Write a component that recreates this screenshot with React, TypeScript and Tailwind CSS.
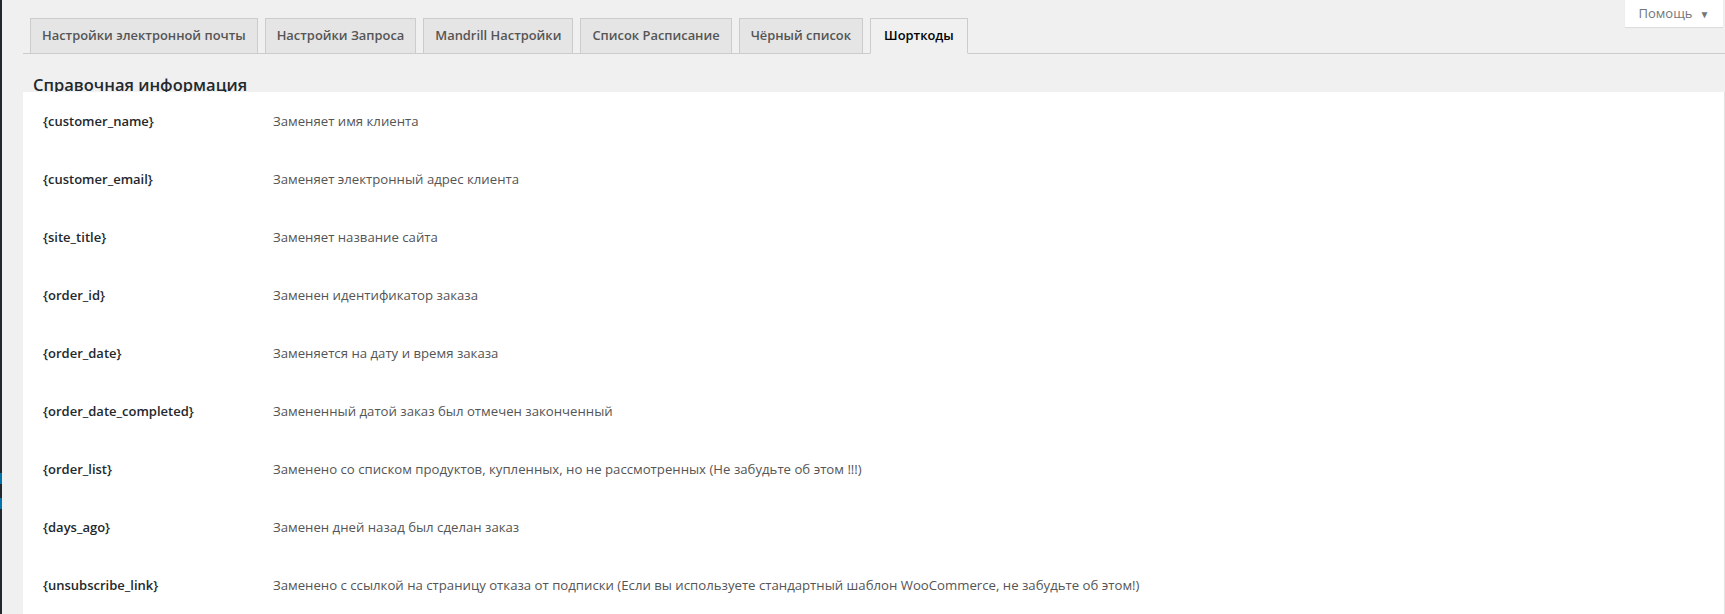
import React from "react";

const tabs = [
  "Настройки электронной почты",
  "Настройки Запроса",
  "Mandrill Настройки",
  "Список Расписание",
  "Чёрный список",
  "Шорткоды",
];

const rows: [string, string][] = [
  ["{customer_name}", "Заменяет имя клиента"],
  ["{customer_email}", "Заменяет электронный адрес клиента"],
  ["{site_title}", "Заменяет название сайта"],
  ["{order_id}", "Заменен идентификатор заказа"],
  ["{order_date}", "Заменяется на дату и время заказа"],
  ["{order_date_completed}", "Замененный датой заказ был отмечен законченный"],
  ["{order_list}", "Заменено со списком продуктов, купленных, но не рассмотренных (Не забудьте об этом !!!)"],
  ["{days_ago}", "Заменен дней назад был сделан заказ"],
  ["{unsubscribe_link}", "Заменено с ссылкой на страницу отказа от подписки (Если вы используете стандартный шаблон WooCommerce, не забудьте об этом!)"],
];

export default function App() {
  return (
    <div
      className="flex h-[614px] w-[1725px] overflow-hidden bg-[#f0f0f0]"
      style={{ fontFamily: '"Open Sans", "Noto Sans", sans-serif' }}
    >
      {/* admin menu edge */}
      <div className="flex w-[2px] shrink-0 flex-col bg-[#23282d]">
        <div className="h-[473px]" />
        <div className="h-[11px] bg-[#0073aa]" />
        <div className="h-[14px]" />
        <div className="h-[11px] bg-[#0073aa]" />
      </div>

      <div className="relative flex-1 pl-[21px]">
        {/* help tab */}
        <div className="absolute right-[2px] top-0 flex h-[27px] w-[98px] items-center justify-center gap-[7px] bg-white text-[13px] text-[#72777c] shadow-[0_1px_1px_rgba(0,0,0,0.08)]">
          <span>Помощь</span>
          <span className="text-[10px] leading-none">▼</span>
        </div>

        {/* tabs */}
        <div className="flex h-[54px] items-end gap-[7px] border-b border-[#cccccc] pl-[7px] pr-[1px]">
          {tabs.map((t, i) => {
            const active = i === tabs.length - 1;
            return (
              <div
                key={t}
                className={
                  active
                    ? "-mb-px flex h-[36px] items-center border border-b-[#f0f0f0] border-[#cccccc] bg-[#f0f0f0] px-[13px] text-[12.9px] font-semibold text-black"
                    : "flex h-[35px] items-center border border-b-0 border-[#cccccc] bg-[#e5e5e5] px-[11px] text-[12.9px] font-semibold text-[#555555]"
                }
              >
                {t}
              </div>
            );
          })}
        </div>

        {/* heading */}
        <div className="h-[38px] overflow-hidden pl-[10px]">
          <h2 className="pt-[19px] text-[16.5px] font-semibold leading-[23px] text-[#23282d]">
            Справочная информация
          </h2>
        </div>

        {/* panel */}
        <div className="h-full border-r border-[#e2e2e2] bg-white pl-[20px]">
          {rows.map(([k, v]) => (
            <div key={k} className="grid h-[58px] grid-cols-[230px_1fr] items-center pt-[2px]">
              <div className="text-[13px] font-semibold text-[#23282d]">{k}</div>
              <div className="text-[13.2px] text-[#555555]">{v}</div>
            </div>
          ))}
        </div>
      </div>
    </div>
  );
}
